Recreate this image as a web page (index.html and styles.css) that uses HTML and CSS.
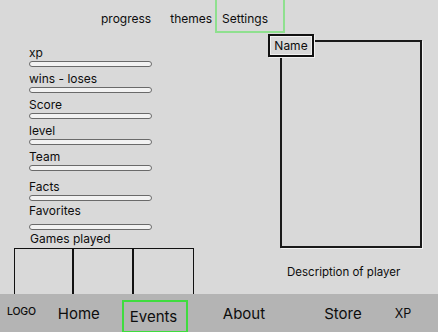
FILE: index.html
```html
<!DOCTYPE html>
<html lang="en">
<head>
<meta charset="utf-8">
<title>Player profile</title>
<link rel="stylesheet" href="styles.css">
</head>
<body>
<div class="page">
  <header class="topnav">
    <a class="topnav__link">progress</a>
    <a class="topnav__link">themes</a>
    <a class="topnav__link topnav__link--active">Settings</a>
  </header>

  <main class="content">
    <section class="stats">
      <div class="stat"><span class="stat__label">xp</span><span class="stat__bar"></span></div>
      <div class="stat"><span class="stat__label">wins - loses</span><span class="stat__bar"></span></div>
      <div class="stat"><span class="stat__label">Score</span><span class="stat__bar"></span></div>
      <div class="stat"><span class="stat__label">level</span><span class="stat__bar"></span></div>
      <div class="stat stat--gap"><span class="stat__label">Team</span><span class="stat__bar"></span></div>
      <div class="stat stat--tight"><span class="stat__label">Facts</span><span class="stat__bar"></span></div>
      <div class="stat stat--tight"><span class="stat__label">Favorites</span><span class="stat__bar stat__bar--low"></span></div>
      <div class="games">
        <span class="games__label">Games played</span>
        <div class="games__grid">
          <div class="games__cell"></div>
          <div class="games__cell"></div>
          <div class="games__cell"></div>
        </div>
      </div>
    </section>

    <section class="profile">
      <div class="profile__card">
        <span class="profile__name">Name</span>
      </div>
      <p class="profile__desc">Description of player</p>
    </section>
  </main>

  <footer class="bottomnav">
    <span class="bottomnav__logo">LOGO</span>
    <a class="bottomnav__link bottomnav__link--home">Home</a>
    <a class="bottomnav__link bottomnav__link--events">Events</a>
    <a class="bottomnav__link bottomnav__link--about">About</a>
    <a class="bottomnav__link bottomnav__link--store">Store</a>
    <a class="bottomnav__xp">XP</a>
  </footer>
</div>
</body>
</html>
```

FILE: styles.css
```css
* { box-sizing: border-box; }

html, body {
  margin: 0;
  padding: 0;
  background: #d9d9d9;
}

body {
  font-family: Inter, "Liberation Sans", sans-serif;
  color: #0d0d0d;
  font-size: 12px;
}

.page {
  width: 438px;
  height: 332px;
  display: flex;
  flex-direction: column;
  overflow: hidden;
}

/* top nav */
.topnav {
  display: flex;
  align-items: center;
  height: 33px;
  padding-left: 94px;
  gap: 5px;
  flex: none;
}

.topnav__link {
  font-size: 12px;
  padding: 4px 7px 0;
}

.topnav__link--active {
  align-self: flex-start;
  margin-left: -9px;
  margin-top: -3px;
  height: 36px;
  width: 70px;
  padding: 7px 0 0 5px;
  display: flex;
  align-items: center;
  border: 2px solid #8fe08f;
}

/* main */
.content {
  flex: 1;
  display: flex;
  justify-content: space-between;
  min-height: 0;
}

.stats {
  padding-top: 13px;
  padding-left: 14px;
  display: flex;
  flex-direction: column;
  width: 200px;
}

.stat {
  display: flex;
  flex-direction: column;
  padding-left: 15px;
  margin-bottom: 5px;
}

.stat--gap {
  margin-bottom: 9px;
}

.stat--tight {
  margin-bottom: 3px;
}

.stat__label {
  line-height: 14px;
  height: 14px;
  font-size: 12px;
}

.stat__bar {
  display: block;
  margin-top: 1px;
  width: 123px;
  height: 6px;
  border: 1.5px solid #6a6a6a;
  border-radius: 3px;
  background: #f2f2f2;
}

.stat__bar--low {
  margin-top: 6px;
}

.games {
  display: flex;
  flex-direction: column;
  flex: 1;
  margin-top: -1px;
}

.games__label {
  padding-left: 16px;
  line-height: 14px;
  font-size: 12px;
}

.games__grid {
  margin-top: 2px;
  flex: 1;
  width: 180px;
  display: grid;
  grid-template-columns: 59px 60px 1fr;
  border: 1.5px solid #111;
  border-bottom: none;
}

.games__cell {
  border-right: 2px solid #111;
}

.games__cell:last-child {
  border-right: none;
}

/* profile */
.profile {
  width: 158px;
  padding-top: 7px;
  padding-right: 16px;
  display: flex;
  flex-direction: column;
  align-items: flex-end;
}

.profile__card {
  position: relative;
  width: 142px;
  height: 208px;
  border: 2px solid #1a1a1a;
  box-shadow: 1px 1px 0 #f3f3f3;
}

.profile__name {
  position: absolute;
  left: -14px;
  top: -8px;
  width: 46px;
  height: 23px;
  display: flex;
  align-items: center;
  justify-content: center;
  font-size: 12px;
  background: #d9d9d9;
  border: 2px solid #111;
  box-shadow: inset 0 0 0 1px #f2f2f2, 1px 1px 0 #f2f2f2;
}

.profile__desc {
  margin: 17px 0 0;
  width: 142px;
  padding-left: 7px;
  font-size: 11.5px;
  line-height: 14px;
}

/* bottom nav */
.bottomnav {
  flex: none;
  height: 38px;
  background: #b4b4b4;
  display: flex;
  align-items: center;
  padding-left: 7px;
}

.bottomnav__logo {
  font-size: 10.5px;
  font-weight: 500;
  letter-spacing: -0.2px;
  margin-top: -4px;
}

.bottomnav__link {
  font-size: 15px;
}

.bottomnav__link--home { margin-left: 22px; }

.bottomnav__link--events {
  margin-left: 22px;
  align-self: flex-end;
  height: 32px;
  width: 66px;
  padding-left: 6px;
  display: flex;
  align-items: center;
  border: 2px solid #3fdc3f;
  border-bottom-width: 1px;
}

.bottomnav__link--about { margin-left: 35px; }
.bottomnav__link--store { margin-left: 59px; }

.bottomnav__xp {
  margin-left: 33px;
  font-size: 12.5px;
  font-weight: 400;
}
```
